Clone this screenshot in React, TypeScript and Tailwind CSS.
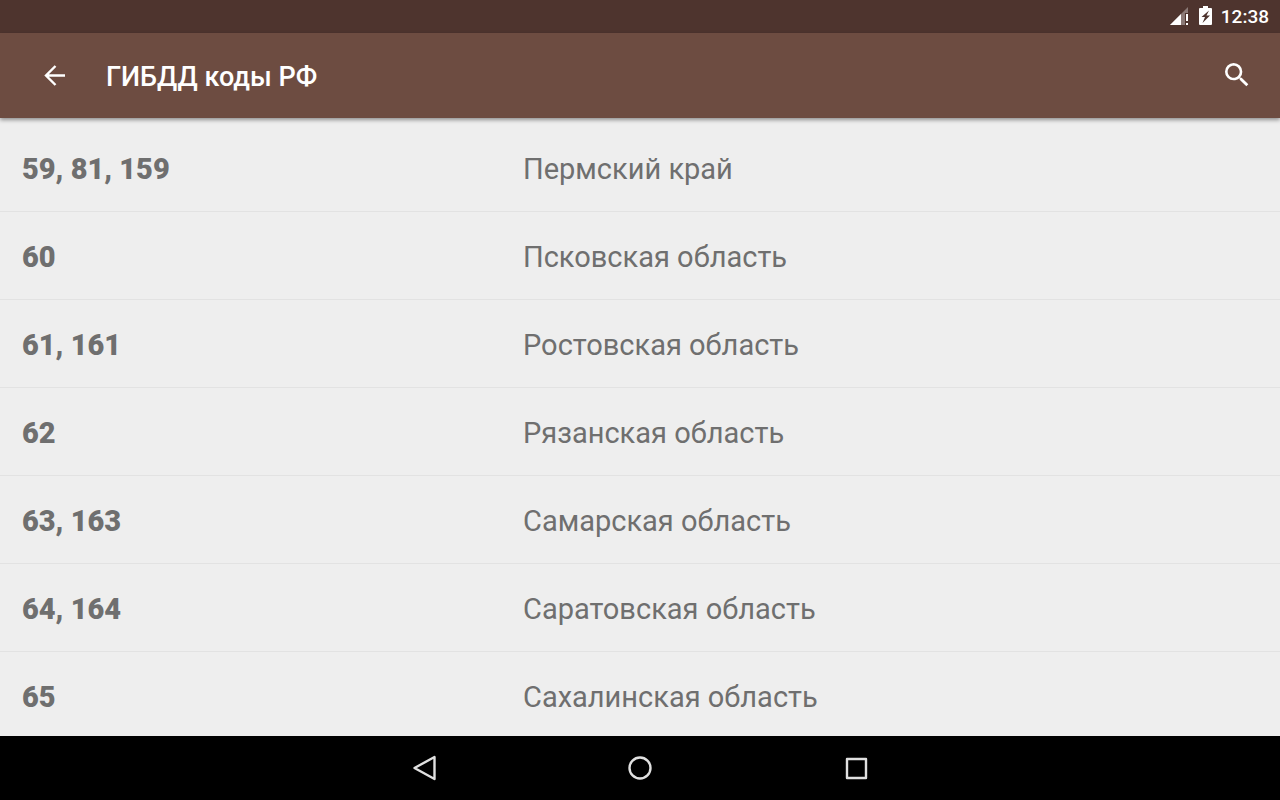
import React from "react";
import { MdSearch } from "react-icons/md";

interface Region {
  codes: string;
  name: string;
}

const regions: Region[] = [
  { codes: "59, 81, 159", name: "Пермский край" },
  { codes: "60", name: "Псковская область" },
  { codes: "61, 161", name: "Ростовская область" },
  { codes: "62", name: "Рязанская область" },
  { codes: "63, 163", name: "Самарская область" },
  { codes: "64, 164", name: "Саратовская область" },
  { codes: "65", name: "Сахалинская область" },
];

const StatusBar = () => (
  <div className="flex h-[33px] shrink-0 items-center justify-end bg-[#4e342e] pr-[11px] pb-px text-white">
    {/* Signal */}
    <svg className="mr-[10px] h-5 w-5" viewBox="0 0 20 20" fill="currentColor">
      <path d="M19 1v6h-3v12H1z" opacity="0.35" />
      <path d="M12 8v11H1z" />
      <path d="M17 8h2v7h-2zM17 17h2v2h-2z" />
    </svg>
    {/* Battery */}
    <svg className="mr-[9px] h-5 w-[13px]" viewBox="0 0 13 20">
      <path
        fill="currentColor"
        fillRule="evenodd"
        d="M4 0h5v2h3a1 1 0 0 1 1 1v15a1 1 0 0 1-1 1H1a1 1 0 0 1-1-1V3a1 1 0 0 1 1-1h3zM10 4.500L2.500 11H6L3.500 17L11 9.500H7.500z"
      />
    </svg>
    <time className="pt-[2px] text-[19px] leading-6 font-medium">12:38</time>
  </div>
);

const AppBar = () => (
  <header className="z-10 flex h-[85px] shrink-0 items-center bg-[#6d4c41] pr-[27px] pl-[38px] text-white shadow-[0_2px_4px_rgba(0,0,0,0.4)]">
    <button type="button" aria-label="Назад">
      <svg
        className="h-8 w-8"
        viewBox="0 0 32 32"
        fill="none"
        stroke="currentColor"
        strokeWidth={2.4}
      >
        <path d="M27 15.500H8M17.500 6L8 15.500l9.500 9.500" />
      </svg>
    </button>
    <h1 className="ml-9 flex-1 pt-[2px] text-[27px] leading-8 font-medium">
      ГИБДД коды РФ
    </h1>
    <button type="button" aria-label="Поиск" className="pb-[2px]">
      <MdSearch className="h-8 w-8" />
    </button>
  </header>
);

const RegionList = () => (
  <main className="min-h-0 flex-1 overflow-hidden pt-[5px]">
    <table className="w-full table-fixed border-collapse text-left text-[29px] leading-9 text-[#6f6f6f]">
      <tbody>
        {regions.map((r) => (
          <tr key={r.codes} className="h-[88px] border-b border-[#e2e2e2]">
            <th scope="row" className="w-2/5 pt-1 pl-[22px] font-black">
              {r.codes}
            </th>
            <td className="pt-1 pl-[11px]">{r.name}</td>
          </tr>
        ))}
      </tbody>
    </table>
  </main>
);

const NavBar = () => (
  <nav className="flex h-16 shrink-0 items-center justify-center bg-black text-[#e0e0e0]">
    <button type="button" aria-label="Назад" className="flex w-[216px] justify-center">
      <svg className="h-8 w-8" viewBox="0 0 32 32" fill="none" stroke="currentColor" strokeWidth={2.4} strokeLinejoin="round">
        <path d="M26.500 5v22L6.500 16z" />
      </svg>
    </button>
    <button type="button" aria-label="Домой" className="flex w-[216px] justify-center">
      <svg className="h-8 w-8" viewBox="0 0 32 32" fill="none" stroke="currentColor" strokeWidth={2.4}>
        <circle cx="16" cy="16" r="10.500" />
      </svg>
    </button>
    <button type="button" aria-label="Недавние" className="flex w-[216px] justify-center">
      <svg className="h-8 w-8" viewBox="0 0 32 32" fill="none" stroke="currentColor" strokeWidth={2.4} strokeLinejoin="round">
        <path d="M7 7h19v19H7z" />
      </svg>
    </button>
  </nav>
);

const App = () => (
  <div className="flex h-screen flex-col bg-[#eeeeee] font-[Roboto,sans-serif]">
    <StatusBar />
    <AppBar />
    <RegionList />
    <NavBar />
  </div>
);

export default App;
